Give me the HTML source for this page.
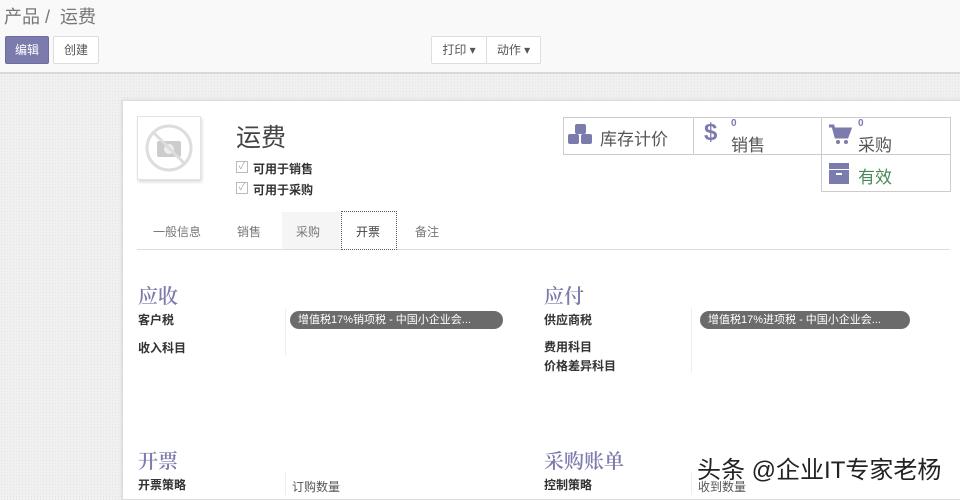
<!DOCTYPE html>
<html><head><meta charset="utf-8"><style>
*{margin:0;padding:0;box-sizing:border-box}
body{width:960px;height:495px;overflow:hidden;position:relative;font-family:"Liberation Sans","Noto Sans CJK SC",sans-serif;color:#333;background:#f0f0f0;background-image:radial-gradient(#e4e4e4 0.6px,transparent 0.7px);background-size:3px 3px}
.a{position:absolute;white-space:nowrap}
.top{left:0;top:0;width:960px;height:74px;background:#f9f9f9;border-bottom:2px solid #d8d8d8}
.btn{height:28px;top:36px;border:1px solid #ddd;background:#fff;font-size:12px;line-height:26px;text-align:center;color:#555;border-radius:2px}
.sheet{left:122px;top:100px;width:850px;height:400px;background:#fff;border:1px solid #ddd;box-shadow:0 0 4px rgba(0,0,0,.1)}
.lbl{font-size:12px;font-weight:bold;color:#333}
.h{font-size:20px;color:#7c7bad;font-family:"Liberation Serif","Noto Serif CJK SC",serif;font-weight:600}
.tag{height:18px;border-radius:9px;background:#6b6b6b;color:#fff;font-size:11px;line-height:18px;padding-left:8px}
.stat{border:1px solid #ccc;height:38px;background:#fff}
.pu{color:#7c7bad}
</style></head><body>
<div class="a top"></div>
<div class="a" style="left:4px;top:3px;font-size:18px;color:#777">产品 /&nbsp; 运费</div>
<div class="a btn" style="left:5px;width:44px;background:#7c7bad;border-color:#6e6da0;color:#fff">编辑</div>
<div class="a btn" style="left:53px;width:46px">创建</div>
<div class="a btn" style="left:431px;width:56px">打印 ▾</div>
<div class="a btn" style="left:486px;width:55px">动作 ▾</div>

<div class="a sheet"></div>
<div class="a" style="left:137px;top:116px;width:64px;height:64px;background:#fff;border:1px solid #e3e3e3;box-shadow:1px 2px 3px rgba(0,0,0,.15)">
<svg width="62" height="62" viewBox="0 0 62 62"><circle cx="31" cy="31" r="22" fill="none" stroke="#ddd" stroke-width="3"/><rect x="19" y="24" width="24" height="16" rx="2" fill="#ccc"/><circle cx="31" cy="32" r="5" fill="#eee"/><line x1="16" y1="16" x2="46" y2="46" stroke="#ddd" stroke-width="3"/></svg></div>
<div class="a" style="left:236px;top:118px;font-size:25px;color:#444">运费</div>
<div class="a" style="left:236px;top:161px;width:12px;height:12px;border:1px solid #bbb;font-size:10px;line-height:10px;color:#aaa;text-align:center">✓</div>
<div class="a lbl" style="left:253px;top:160px">可用于销售</div>
<div class="a" style="left:236px;top:182px;width:12px;height:12px;border:1px solid #bbb;font-size:10px;line-height:10px;color:#aaa;text-align:center">✓</div>
<div class="a lbl" style="left:253px;top:181px">可用于采购</div>

<div class="a stat" style="left:563px;top:117px;width:131px"></div>
<div class="a stat" style="left:693px;top:117px;width:129px"></div>
<div class="a stat" style="left:821px;top:117px;width:130px"></div>
<div class="a stat" style="left:821px;top:154px;width:130px"></div>
<svg class="a" style="left:566px;top:123px" width="30" height="24" viewBox="0 0 30 24"><g fill="#7c7bad"><rect x="9" y="1" width="11" height="10" rx="2"/><rect x="2" y="11" width="11" height="10" rx="2"/><rect x="15" y="11" width="11" height="10" rx="2"/></g></svg>
<div class="a" style="left:600px;top:125px;font-size:17px;color:#555">库存计价</div>
<div class="a pu" style="left:704px;top:119px;font-size:24px;font-weight:bold">$</div>
<div class="a pu" style="left:731px;top:118px;font-size:10px;font-weight:bold">0</div>
<div class="a" style="left:731px;top:131px;font-size:17px;color:#555">销售</div>
<svg class="a" style="left:828px;top:124px" width="24" height="22" viewBox="0 0 24 22"><path d="M1 2h4l3 11h11l3-8H7" fill="none" stroke="#7c7bad" stroke-width="3"/><rect x="7" y="5" width="14" height="7" fill="#7c7bad"/><circle cx="10" cy="18" r="2" fill="#7c7bad"/><circle cx="18" cy="18" r="2" fill="#7c7bad"/></svg>
<div class="a pu" style="left:858px;top:118px;font-size:10px;font-weight:bold">0</div>
<div class="a" style="left:858px;top:131px;font-size:17px;color:#555">采购</div>
<div class="a" style="left:829px;top:163px;width:20px;height:21px;background:#7c7bad"><div style="margin:6px 0 0 0;height:1px;background:#fff"></div><div style="margin:3px auto;width:6px;height:2px;background:#fff"></div></div>
<div class="a" style="left:858px;top:163px;font-size:17px;color:#4a8a5a">有效</div>

<div class="a" style="left:137px;top:249px;width:813px;height:1px;background:#ddd"></div>
<div class="a" style="left:282px;top:212px;width:58px;height:37px;background:#f5f5f5"></div>
<div class="a" style="left:341px;top:211px;width:56px;height:39px;background:#fff;border:1px dotted #555"></div>
<div class="a" style="left:153px;top:223px;font-size:12px;color:#777">一般信息</div>
<div class="a" style="left:237px;top:223px;font-size:12px;color:#777">销售</div>
<div class="a" style="left:296px;top:223px;font-size:12px;color:#777">采购</div>
<div class="a" style="left:356px;top:223px;font-size:12px;color:#444">开票</div>
<div class="a" style="left:415px;top:223px;font-size:12px;color:#777">备注</div>

<div class="a h" style="left:138px;top:280px">应收</div>
<div class="a lbl" style="left:138px;top:311px">客户税</div>
<div class="a lbl" style="left:138px;top:339px">收入科目</div>
<div class="a" style="left:285px;top:308px;width:1px;height:48px;background:#eee"></div>
<div class="a tag" style="left:290px;top:311px;width:213px">增值税17%销项税 - 中国小企业会...</div>
<div class="a h" style="left:544px;top:280px">应付</div>
<div class="a lbl" style="left:544px;top:311px">供应商税</div>
<div class="a lbl" style="left:544px;top:338px">费用科目</div>
<div class="a lbl" style="left:544px;top:357px">价格差异科目</div>
<div class="a" style="left:691px;top:308px;width:1px;height:65px;background:#eee"></div>
<div class="a tag" style="left:700px;top:311px;width:210px">增值税17%进项税 - 中国小企业会...</div>

<div class="a h" style="left:138px;top:445px">开票</div>
<div class="a lbl" style="left:138px;top:476px">开票策略</div>
<div class="a" style="left:285px;top:472px;width:1px;height:23px;background:#eee"></div>
<div class="a" style="left:292px;top:478px;font-size:12px;color:#555">订购数量</div>
<div class="a h" style="left:544px;top:445px">采购账单</div>
<div class="a lbl" style="left:544px;top:476px">控制策略</div>
<div class="a" style="left:691px;top:472px;width:1px;height:23px;background:#eee"></div>
<div class="a" style="left:698px;top:478px;font-size:12px;color:#555">收到数量</div>
<div class="a" style="left:697px;top:450px;font-size:24px;color:#222;text-shadow:0 0 2px #fff,0 0 2px #fff">头条 @企业IT专家老杨</div>
</body></html>
